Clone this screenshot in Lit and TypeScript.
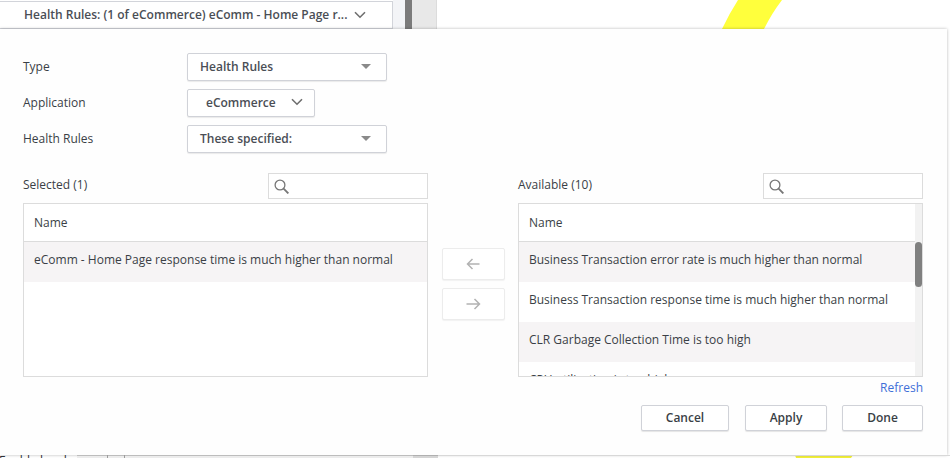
import { LitElement, html, css, svg } from "lit";
import { customElement } from "lit/decorators.js";

const chevron = html`<svg class="chev" width="12" height="8" viewBox="0 0 12 8"><path d="M1 1.2 6 6.2 11 1.2" fill="none" stroke="#6e6e6e" stroke-width="1.6"/></svg>`;
const caret = html`<svg class="caret" width="10" height="5" viewBox="0 0 10 5"><path d="M0 0H10L5 5Z" fill="#8a8a8a"/></svg>`;
const search = html`<svg class="lens" width="15" height="15" viewBox="0 0 15 15"><circle cx="6" cy="6" r="4.9" fill="none" stroke="#777" stroke-width="1.3"/><path d="M9.6 9.6 14.4 14.4" stroke="#777" stroke-width="1.9"/></svg>`;
const arrowLeft = html`<svg width="14" height="12" viewBox="0 0 14 12"><path d="M13.5 6H1.5M6.5 1 1.5 6l5 5" fill="none" stroke="#b2b2b2" stroke-width="1.5"/></svg>`;
const arrowRight = html`<svg width="15" height="12" viewBox="0 0 15 12"><path d="M.5 6h13M8.5 1l5 5-5 5" fill="none" stroke="#b2b2b2" stroke-width="1.5"/></svg>`;

@customElement("app-root")
export class AppRoot extends LitElement {
  static styles = css`
    :host {
      display: block;
      position: relative;
      width: 950px;
      height: 458px;
      overflow: hidden;
      background: #fff;
      font-family: "Open Sans", "Liberation Sans", sans-serif;
      font-size: 12px;
      color: #3a3f46;
    }
    .stripes { position: absolute; left: 0; top: 0; }
    .top { position: relative; display: flex; height: 29px; }
    .crumb {
      box-sizing: border-box;
      width: 393px;
      height: 28px;
      margin-top: 1px;
      padding: 0 0 1px 24px;
      display: flex;
      align-items: center;
      gap: 7px;
      background: #fff;
      border: 1px solid #d2d4da;
      border-left: 0;
      font-weight: 600;
      color: #4a4e55;
      white-space: nowrap;
    }
    .gutter { width: 12px; background: #f3f4f7; }
    .rail { width: 7px; background: #7b7b7b; }
    .track { width: 24px; background: #e8e8e8; border-right: 1px solid #dcdcdc; }
    .panel {
      position: relative;
      box-sizing: border-box;
      width: 947px;
      height: 426px;
      padding: 24px 24px 0 23px;
      background: #fefefe;
      box-shadow: 0 0 3px rgba(0, 0, 0, 0.28);
    }
    .form { display: grid; grid-template-columns: 164px auto; row-gap: 8px; justify-content: start; align-items: center; }
    .label { padding-bottom: 2px; }
    .select {
      box-sizing: border-box;
      height: 28px;
      display: flex;
      align-items: center;
      justify-content: space-between;
      padding: 0 15px 2px 12px;
      background: #fff;
      border: 1px solid #d0d2d8;
      border-radius: 2px;
      box-shadow: 0 1px 1px rgba(0, 0, 0, 0.08);
      font-weight: 600;
      color: #4a4e55;
    }
    .wide { width: 200px; }
    .narrow { width: 128px; padding: 0 11px 2px 18px; }
    .lists { display: grid; grid-template-columns: 405px 90px 405px; margin-top: 20px; }
    .head { height: 26px; display: flex; align-items: center; justify-content: space-between; margin-bottom: 4px; }
    .title { padding-bottom: 4px; }
    .search {
      box-sizing: border-box;
      width: 160px;
      height: 26px;
      padding: 5px 0 0 5px;
      border: 1px solid #dcdcdc;
      background: #fff;
    }
    .lens { display: block; }
    .table {
      position: relative;
      box-sizing: border-box;
      height: 174px;
      border: 1px solid #dcdcdc;
      background: #fff;
      overflow: hidden;
    }
    .th { box-sizing: border-box; height: 38px; padding-left: 10px; display: flex; align-items: center; border-bottom: 1px solid #dcdcdc; }
    .tr { box-sizing: border-box; height: 40px; padding: 0 0 6px 10px; display: flex; align-items: center; }
    .alt { background: #f6f4f5; }
    .scrolled { padding-right: 7px; }
    .scrolled .th { margin-right: -7px; }
    .bar { position: absolute; top: 0; right: 0; bottom: 0; width: 7px; background: #f2f2f2; }
    .thumb { position: absolute; top: 38px; left: 0; width: 7px; height: 45px; border-radius: 4px; background: #808080; }
    .mid { display: flex; flex-direction: column; align-items: center; gap: 8px; padding: 75px 0 0 0; }
    .move {
      box-sizing: border-box;
      width: 63px;
      height: 32px;
      display: flex;
      align-items: center;
      justify-content: center;
      border: 1px solid #ececec;
      border-radius: 2px;
      box-shadow: 0 1px 1px rgba(0, 0, 0, 0.05);
      background: #fff;
    }
    .refresh { margin-top: 2px; height: 17px; line-height: 17px; text-align: right; color: #3f6fd8; }
    .actions { display: flex; justify-content: flex-end; gap: 16px; margin-top: 9px; }
    .btn {
      box-sizing: border-box;
      height: 26px;
      padding-bottom: 1px;
      display: flex;
      align-items: center;
      justify-content: center;
      border: 1px solid #d0d2d8;
      border-radius: 2px;
      background: #fff;
      box-shadow: 0 1px 1px rgba(0, 0, 0, 0.1);
      font-weight: 600;
    }
    .cancel { width: 88px; }
    .apply { width: 82px; }
    .done { width: 81px; margin-left: -1px; }
    .bottom { position: relative; display: flex; height: 3px; overflow: hidden; }
    .clipped { flex: none; width: 77px; line-height: 16px; height: 16px; margin-top: -2px; white-space: nowrap; text-indent: -1px; color: #2e3238; }
    .strip { flex: none; background: linear-gradient(#bdbdbd 1px, #ececec 1px); }
    .s1 { width: 30px; }
    .s2 { width: 16px; border-left: 1px solid #9c9c9c; border-right: 1px solid #9c9c9c; }
    .s3 { width: 288px; }
    .s4 { width: 25px; background: linear-gradient(#b0b0b0 1px, #d4d4d4 1px); }
    .s5 { flex: 1; background: linear-gradient(#d8d8d8 1px, transparent 1px); }
  `;

  private table(rows: string[], scrolled: boolean) {
    return html`<div class="table ${scrolled ? "scrolled" : ""}">
      <div class="th">Name</div>
      ${rows.map((r, i) => html`<div class="tr ${i % 2 === 0 ? "alt" : ""}">${r}</div>`)}
      ${scrolled ? html`<div class="bar"><div class="thumb"></div></div>` : ""}
    </div>`;
  }

  render() {
    return html`
      <svg class="stripes" width="950" height="458" viewBox="0 0 950 458">
        ${svg`<path d="M738 0H782Q772 13 764 29H722Q729 14 738 0Z" fill="#ffff3c"/>
        <path d="M795 455H853L851 458H796Z" fill="#f2f03a"/>`}
      </svg>
      <div class="top">
        <div class="crumb">Health Rules: (1 of eCommerce) eComm - Home Page r... ${chevron}</div>
        <div class="gutter"></div>
        <div class="rail"></div>
        <div class="track"></div>
      </div>
      <div class="panel">
        <div class="form">
          <div class="label">Type</div>
          <div class="select wide">Health Rules ${caret}</div>
          <div class="label">Application</div>
          <div class="select narrow">eCommerce ${chevron}</div>
          <div class="label">Health Rules</div>
          <div class="select wide">These specified: ${caret}</div>
        </div>
        <div class="lists">
          <div>
            <div class="head"><span class="title">Selected (1)</span><div class="search">${search}</div></div>
            ${this.table(["eComm - Home Page response time is much higher than normal"], false)}
          </div>
          <div class="mid">
            <div class="move">${arrowLeft}</div>
            <div class="move">${arrowRight}</div>
          </div>
          <div>
            <div class="head"><span class="title">Available (10)</span><div class="search">${search}</div></div>
            ${this.table([
              "Business Transaction error rate is much higher than normal",
              "Business Transaction response time is much higher than normal",
              "CLR Garbage Collection Time is too high",
              "CPU utilization is too high",
            ], true)}
            <div class="refresh">Refresh</div>
          </div>
        </div>
        <div class="actions">
          <div class="btn cancel">Cancel</div>
          <div class="btn apply">Apply</div>
          <div class="btn done">Done</div>
        </div>
      </div>
      <div class="bottom">
        <div class="clipped">Enable border</div>
        <div class="strip s1"></div>
        <div class="strip s2"></div>
        <div class="strip s3"></div>
        <div class="strip s4"></div>
        <div class="strip s5"></div>
      </div>
    `;
  }
}
